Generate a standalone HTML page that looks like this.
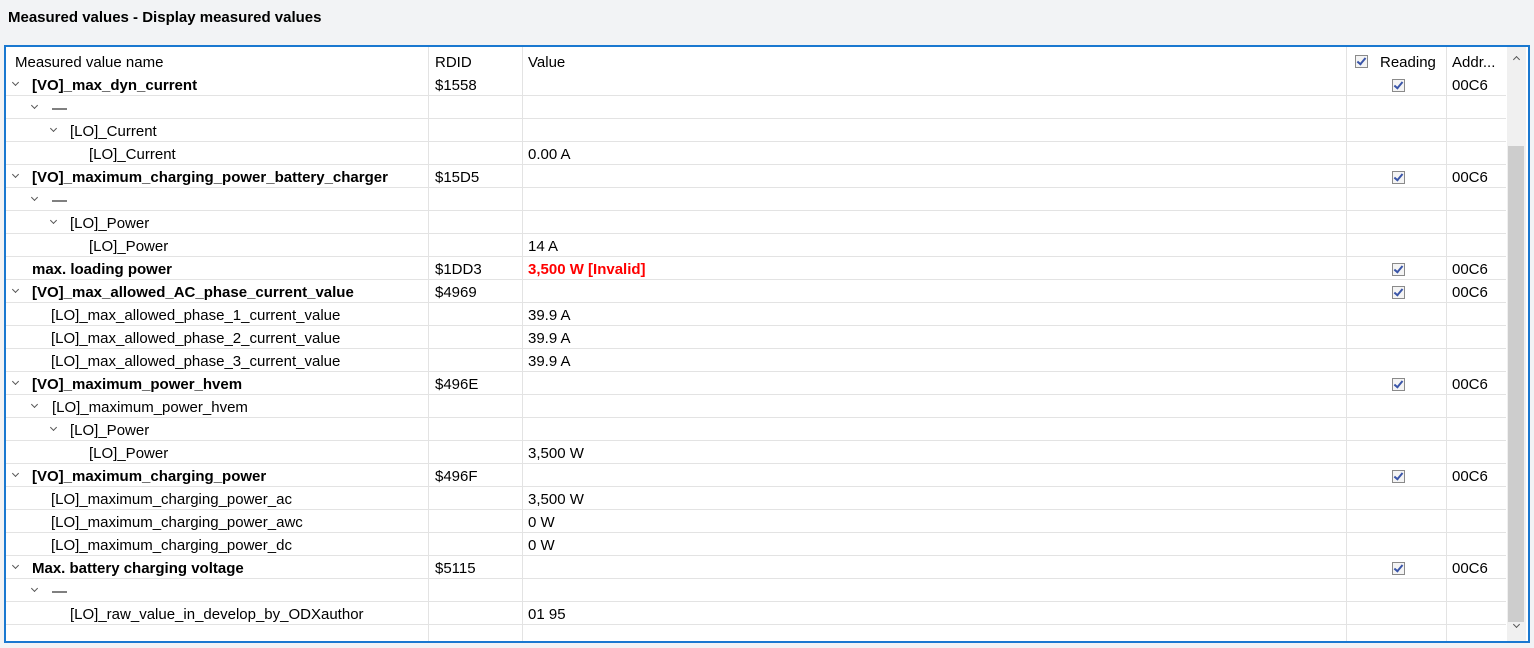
<!DOCTYPE html>
<html><head><style>
body{margin:0;width:1534px;height:648px;background:#f2f3f5;font-family:"Liberation Sans",sans-serif;position:relative;overflow:hidden;color:#000}
.title{position:absolute;left:8px;top:9px;font-weight:bold;font-size:15px}
.box{position:absolute;left:4px;top:45px;width:1522px;height:594px;border:2px solid #1a78d0;background:#fff;overflow:hidden}
.vl{position:absolute;top:0;bottom:0;width:1px;background:#e3e3e3}
.r{position:absolute;left:0;width:1500px;height:22px;border-bottom:1px solid #e3e3e3;font-size:15px;line-height:22px}
.r span{position:absolute;white-space:nowrap;top:2px}
.b{font-weight:bold}
.ch{position:absolute;width:4px;height:4px;border-right:1.5px solid #555;border-bottom:1.5px solid #555;transform:rotate(45deg);top:7px}
.cb{position:absolute;left:1386px;top:6px;width:11px;height:11px;border:1px solid #8a8a8a;background:#f4f4f4}
.cb:after{content:"";position:absolute;left:3px;top:0px;width:3px;height:7px;border-right:2px solid #3a55a8;border-bottom:2px solid #3a55a8;transform:rotate(40deg)}
.sb{position:absolute;left:1501px;top:0;width:19px;height:594px;background:#f0f0f0}
.th{position:absolute;left:1px;top:99px;width:16px;height:476px;background:#cdcdcd}
</style></head><body>
<div class="title">Measured values - Display measured values</div>
<div class="box">
<div class="vl" style="left:422px"></div>
<div class="vl" style="left:516px"></div>
<div class="vl" style="left:1340px"></div>
<div class="vl" style="left:1440px"></div>
<div class="r" style="top:3px;border:none"><span style="left:9px">Measured value name</span><span style="left:429px">RDID</span><span style="left:522px">Value</span><div class="cb" style="left:1349px;top:5px"></div><span style="left:1374px">Reading</span><span style="left:1446px">Addr...</span></div>
<div class="sb"><div class="th"></div>
<div class="ch" style="left:7px;top:10px;transform:rotate(225deg)"></div>
<div class="ch" style="left:7px;top:575px"></div></div>
</div>
<div style="position:absolute;left:6px;top:73px">
<div class="r" style="top:0"><div class="ch" style="left:7px"></div><span class="b" style="left:26px">[VO]_max_dyn_current</span><span style="left:429px">$1558</span><div class="cb"></div><span style="left:1446px">00C6</span></div>
<div class="r" style="top:23px"><div class="ch" style="left:26px"></div><span style="left:46px">—</span></div>
<div class="r" style="top:46px"><div class="ch" style="left:45px"></div><span style="left:64px">[LO]_Current</span></div>
<div class="r" style="top:69px"><span style="left:83px">[LO]_Current</span><span style="left:522px">0.00 A</span></div>
<div class="r" style="top:92px"><div class="ch" style="left:7px"></div><span class="b" style="left:26px">[VO]_maximum_charging_power_battery_charger</span><span style="left:429px">$15D5</span><div class="cb"></div><span style="left:1446px">00C6</span></div>
<div class="r" style="top:115px"><div class="ch" style="left:26px"></div><span style="left:46px">—</span></div>
<div class="r" style="top:138px"><div class="ch" style="left:45px"></div><span style="left:64px">[LO]_Power</span></div>
<div class="r" style="top:161px"><span style="left:83px">[LO]_Power</span><span style="left:522px">14 A</span></div>
<div class="r" style="top:184px"><span class="b" style="left:26px">max. loading power</span><span style="left:429px">$1DD3</span><span class="b" style="left:522px;color:#f00">3,500 W [Invalid]</span><div class="cb"></div><span style="left:1446px">00C6</span></div>
<div class="r" style="top:207px"><div class="ch" style="left:7px"></div><span class="b" style="left:26px">[VO]_max_allowed_AC_phase_current_value</span><span style="left:429px">$4969</span><div class="cb"></div><span style="left:1446px">00C6</span></div>
<div class="r" style="top:230px"><span style="left:45px">[LO]_max_allowed_phase_1_current_value</span><span style="left:522px">39.9 A</span></div>
<div class="r" style="top:253px"><span style="left:45px">[LO]_max_allowed_phase_2_current_value</span><span style="left:522px">39.9 A</span></div>
<div class="r" style="top:276px"><span style="left:45px">[LO]_max_allowed_phase_3_current_value</span><span style="left:522px">39.9 A</span></div>
<div class="r" style="top:299px"><div class="ch" style="left:7px"></div><span class="b" style="left:26px">[VO]_maximum_power_hvem</span><span style="left:429px">$496E</span><div class="cb"></div><span style="left:1446px">00C6</span></div>
<div class="r" style="top:322px"><div class="ch" style="left:26px"></div><span style="left:46px">[LO]_maximum_power_hvem</span></div>
<div class="r" style="top:345px"><div class="ch" style="left:45px"></div><span style="left:64px">[LO]_Power</span></div>
<div class="r" style="top:368px"><span style="left:83px">[LO]_Power</span><span style="left:522px">3,500 W</span></div>
<div class="r" style="top:391px"><div class="ch" style="left:7px"></div><span class="b" style="left:26px">[VO]_maximum_charging_power</span><span style="left:429px">$496F</span><div class="cb"></div><span style="left:1446px">00C6</span></div>
<div class="r" style="top:414px"><span style="left:45px">[LO]_maximum_charging_power_ac</span><span style="left:522px">3,500 W</span></div>
<div class="r" style="top:437px"><span style="left:45px">[LO]_maximum_charging_power_awc</span><span style="left:522px">0 W</span></div>
<div class="r" style="top:460px"><span style="left:45px">[LO]_maximum_charging_power_dc</span><span style="left:522px">0 W</span></div>
<div class="r" style="top:483px"><div class="ch" style="left:7px"></div><span class="b" style="left:26px">Max. battery charging voltage</span><span style="left:429px">$5115</span><div class="cb"></div><span style="left:1446px">00C6</span></div>
<div class="r" style="top:506px"><div class="ch" style="left:26px"></div><span style="left:46px">—</span></div>
<div class="r" style="top:529px"><span style="left:64px">[LO]_raw_value_in_develop_by_ODXauthor</span><span style="left:522px">01 95</span></div>
</div>
</body></html>
